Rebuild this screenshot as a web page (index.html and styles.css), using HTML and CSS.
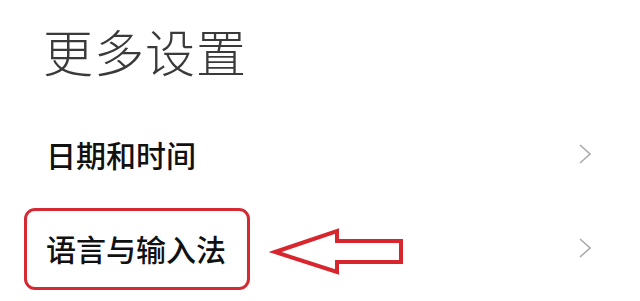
FILE: index.html
```html
<!DOCTYPE html>
<html lang="zh-CN">
<head>
<meta charset="utf-8">
<title>更多设置</title>
<link rel="stylesheet" href="styles.css">
</head>
<body>
<div class="page">
  <h1 class="title">更多设置</h1>
  <div class="list">
    <div class="row">
      <span class="label">日期和时间</span>
      <svg class="chevron" width="12" height="20" viewBox="0 0 12 20"><polyline points="1,1 11,10 1,19" fill="none" stroke="#ababab" stroke-width="1.6"/></svg>
    </div>
    <div class="row">
      <span class="label">语言与输入法</span>
      <svg class="chevron" width="12" height="20" viewBox="0 0 12 20"><polyline points="1,1 11,10 1,19" fill="none" stroke="#ababab" stroke-width="1.6"/></svg>
      <div class="highlight"></div>
      <svg class="arrow" width="140" height="54" viewBox="0 0 140 54"><polygon points="9,27 71,6 71,16 135,16 135,37 71,37 71,47" fill="none" stroke="#d7262e" stroke-width="4"/></svg>
    </div>
  </div>
</div>
</body>
</html>
```
FILE: styles.css
```css
html, body {
  margin: 0;
  padding: 0;
  background: #ffffff;
}
.page {
  width: 640px;
  height: 301px;
  overflow: hidden;
  font-family: "Noto Sans CJK SC", "Noto Sans", sans-serif;
}
.title {
  margin: 25px 0 0 0;
  padding-left: 43px;
  height: 50px;
  font-size: 50px;
  line-height: 50px;
  font-weight: 300;
  color: #3a3a3a;
  letter-spacing: 1px;
}
.list {
  margin-top: 32px;
}
.row {
  position: relative;
  height: 94px;
  display: flex;
  align-items: center;
  justify-content: space-between;
  padding: 0 49px 0 46px;
}
.label {
  font-size: 30px;
  font-weight: 500;
  color: #111111;
  line-height: 30px;
}
.chevron {
  display: block;
}
.highlight {
  position: absolute;
  left: 24px;
  top: 7px;
  width: 226px;
  height: 82px;
  box-sizing: border-box;
  border: 3.5px solid #d42a33;
  border-radius: 11px;
}
.arrow {
  position: absolute;
  left: 266px;
  top: 24px;
}
```
